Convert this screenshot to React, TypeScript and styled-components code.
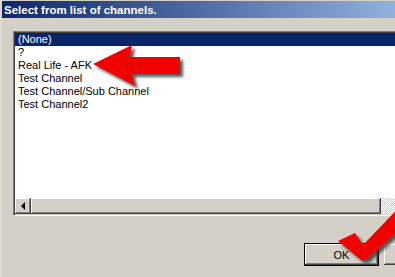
import React from "react";
import styled, { createGlobalStyle } from "styled-components";

// チャンネル一覧
const channels: string[] = [
  "(None)",
  "?",
  "Real Life - AFK",
  "Test Channel",
  "Test Channel/Sub Channel",
  "Test Channel2",
];

const GlobalStyle = createGlobalStyle`
  html, body {
    margin: 0;
    padding: 0;
    overflow: hidden;
    background: #d4d0c8;
  }
`;

export default function App() {
  return (
    <>
      <GlobalStyle />
      <Window>
        <TitleBar>Select from list of channels.</TitleBar>
        <Body>
          <ListBox>
            <Items>
              {channels.map((name, i) => (
                <Row key={name} selected={i === 0}>
                  {name}
                </Row>
              ))}
            </Items>
            <HScroll>
              <ArrowButton>
                <LeftTriangle />
              </ArrowButton>
              <Thumb />
              <Track />
              <ArrowButton>
                <RightTriangle />
              </ArrowButton>
            </HScroll>
          </ListBox>
          <Footer>
            <DialogButton isDefault>OK</DialogButton>
            {/* Cancel はフレームの外で切れているので文字なし */}
            <DialogButton aria-label="Cancel" />
          </Footer>
        </Body>
        <Annotations />
      </Window>
    </>
  );
}

const Window = styled.div`
  position: relative;
  width: 466px;
  height: 277px;
  box-sizing: border-box;
  padding-top: 1px;
  border-left: 2px solid #dfdbd3;
  background: #d4d0c8;
  display: flex;
  flex-direction: column;
  font-family: "Liberation Sans", Arial, sans-serif;
`;

const TitleBar = styled.div`
  height: 17px;
  display: flex;
  align-items: center;
  padding-left: 2px;
  background: linear-gradient(to right, #0e276c, #a6caf0);
  color: #ffffff;
  font-weight: bold;
  font-size: 11.5px;
  white-space: nowrap;
`;

const Body = styled.div`
  flex: 1;
  display: flex;
  flex-direction: column;
  padding: 13px 8px 0 11px;
`;

// くぼんだ枠
const ListBox = styled.div`
  height: 185px;
  box-sizing: border-box;
  display: flex;
  flex-direction: column;
  border: 1px solid;
  border-color: #808080 #ffffff #ffffff #808080;
  box-shadow: inset 1px 1px #404040, inset -1px -1px #d4d0c8;
  padding: 1px;
  background: #ffffff;
`;

const Items = styled.div`
  flex: 1;
  background: #ffffff;
`;

const Row = styled.div<{ selected?: boolean }>`
  height: 13px;
  line-height: 13px;
  padding-left: 3px;
  font-size: 11px;
  white-space: nowrap;
  color: ${(p) => (p.selected ? "#ffffff" : "#000000")};
  background: ${(p) => (p.selected ? "#0a246a" : "transparent")};
`;

const HScroll = styled.div`
  height: 16px;
  display: flex;
`;

const raised = `
  box-sizing: border-box;
  background: #d4d0c8;
  box-shadow: inset -1px -1px #404040, inset 1px 1px #ffffff,
    inset -2px -2px #808080, inset 2px 2px #d4d0c8;
`;

const ArrowButton = styled.div`
  ${raised}
  width: 16px;
  height: 16px;
  display: flex;
  align-items: center;
  justify-content: center;
`;

const LeftTriangle = styled.div`
  width: 0;
  height: 0;
  margin-left: -1px;
  border-top: 4px solid transparent;
  border-bottom: 4px solid transparent;
  border-right: 4px solid #000000;
`;

const RightTriangle = styled.div`
  width: 0;
  height: 0;
  border-top: 4px solid transparent;
  border-bottom: 4px solid transparent;
  border-left: 4px solid #000000;
`;

const Thumb = styled.div`
  ${raised}
  width: 350px;
  height: 16px;
`;

const Track = styled.div`
  flex: 1;
  background-color: #d4d0c8;
  background-image: repeating-conic-gradient(#ffffff 0 25%, #d4d0c8 0 50%);
  background-size: 2px 2px;
`;

const Footer = styled.div`
  margin-top: 27px;
  display: flex;
  justify-content: flex-end;
  gap: 4px;
`;

const DialogButton = styled.div<{ isDefault?: boolean }>`
  width: 75px;
  height: 23px;
  box-sizing: border-box;
  display: flex;
  align-items: center;
  justify-content: center;
  font-size: 11px;
  color: #000000;
  background: #d4d0c8;
  border: 1px solid ${(p) => (p.isDefault ? "#000000" : "#d4d0c8")};
  box-shadow: inset -1px -1px #404040, inset 1px 1px #ffffff,
    inset -2px -2px #808080;
`;

// 赤い矢印とチェック(スクリーンショットへの書き込み)
const Annotations = () => {
  return (
    <Overlay width="466" height="277" viewBox="0 0 466 277">
      <defs>
        <filter id="shadow" x="-20%" y="-20%" width="140%" height="140%">
          <feDropShadow dx="3" dy="3" stdDeviation="1.5" floodColor="#303030" floodOpacity="0.8" />
        </filter>
      </defs>
      <g filter="url(#shadow)" fill="#f20000">
        <path d="M93 64 L132 45 L130 57 L180 57 L180 74 L132 74 L135 86 Z" />
        <path d="M338 241 L355 233 L363 245 L410 196 L410 220 L366 260 L361 260 Z" />
      </g>
    </Overlay>
  );
};

const Overlay = styled.svg`
  position: absolute;
  left: -2px;
  top: 0;
  pointer-events: none;
`;
